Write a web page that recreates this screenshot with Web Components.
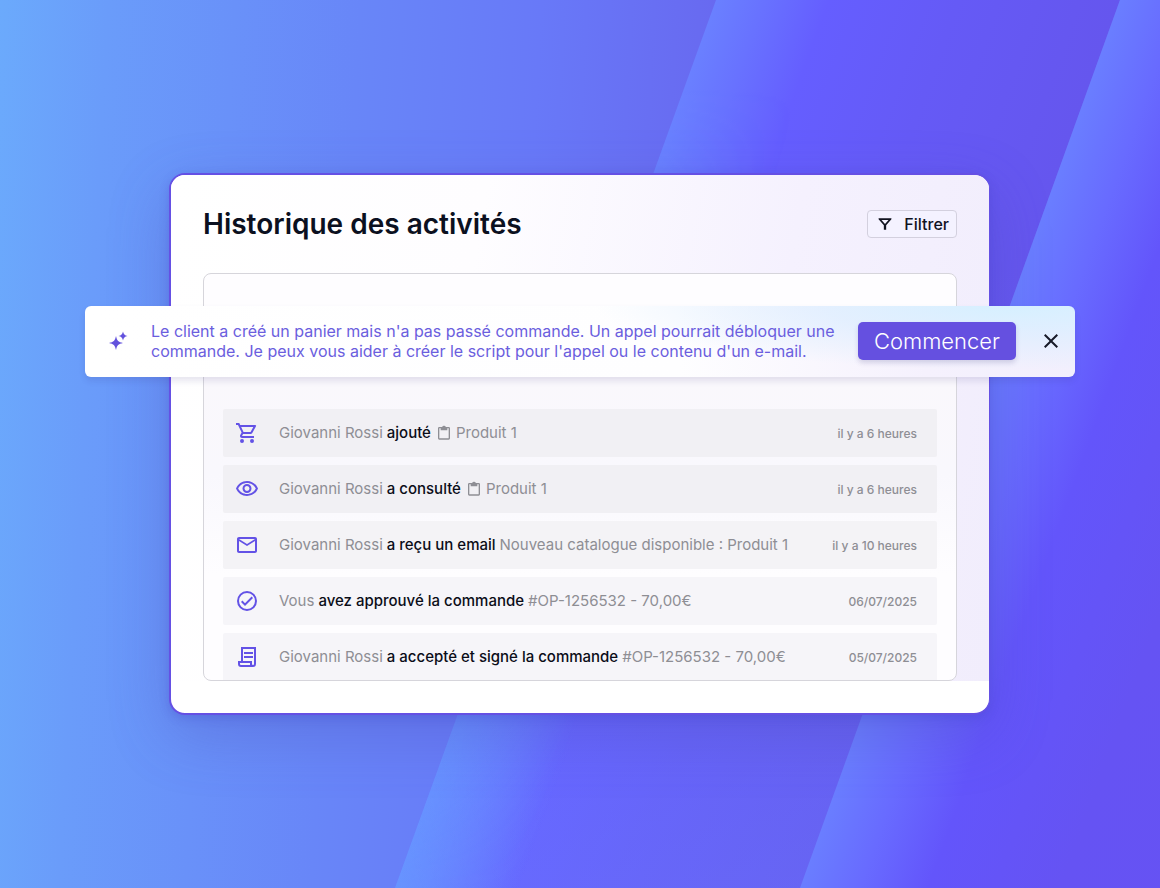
<!DOCTYPE html>
<html lang="fr">
<head>
<meta charset="utf-8">
<meta name="viewport" content="width=device-width, initial-scale=1">
<title>Historique des activités</title>
<style>
  body {
    margin: 0;
    font-family: Inter, "Liberation Sans", sans-serif;
    color: #0b1020;
  }
</style>
</head>
<body>
<activity-stage>
  <activity-card heading="Historique des activités">
    <filter-button slot="action">Filtrer</filter-button>
    <activity-item icon="cart" who="Giovanni Rossi" did="ajouté" when="il y a 6 heures" product>Produit 1</activity-item>
    <activity-item icon="eye" who="Giovanni Rossi" did="a consulté" when="il y a 6 heures" product>Produit 1</activity-item>
    <activity-item icon="mail" who="Giovanni Rossi" did="a reçu un email" when="il y a 10 heures">Nouveau catalogue disponible : Produit 1</activity-item>
    <activity-item icon="check" who="Vous" did="avez approuvé la commande" when="06/07/2025">#OP-1256532 - 70,00€</activity-item>
    <activity-item icon="receipt" who="Giovanni Rossi" did="a accepté et signé la commande" when="05/07/2025">#OP-1256532 - 70,00€</activity-item>
  </activity-card>
  <assistant-banner slot="banner" action="Commencer">Le client a créé un panier mais n'a pas passé commande. Un appel pourrait débloquer une commande. Je peux vous aider à créer le script pour l'appel ou le contenu d'un e-mail.</assistant-banner>
</activity-stage>

<script>
const icons = {
  cart: 'M15.55 13c.75 0 1.41-.41 1.75-1.03l3.58-6.49A.996.996 0 0 0 20.01 4H5.21l-.94-2H1v2h2l3.6 7.59-1.35 2.44C4.52 15.37 5.48 17 7 17h12v-2H7l1.1-2h7.45zM6.16 6h12.15l-2.76 5H8.53L6.16 6zM7 18a2 2 0 1 0 0 4 2 2 0 0 0 0-4zm10 0a2 2 0 1 0 0 4 2 2 0 0 0 0-4z',
  eye: 'M12 6c3.79 0 7.17 2.13 8.82 5.5C19.17 14.87 15.79 17 12 17s-7.17-2.13-8.82-5.5C4.83 8.13 8.21 6 12 6m0-2C7 4 2.73 7.11 1 11.5 2.73 15.89 7 19 12 19s9.27-3.11 11-7.5C21.27 7.11 17 4 12 4zm0 5a2.5 2.5 0 0 1 0 5 2.5 2.5 0 0 1 0-5m0-2a4.5 4.5 0 1 0 0 9 4.5 4.5 0 0 0 0-9z',
  mail: 'M22 6c0-1.1-.9-2-2-2H4c-1.1 0-2 .9-2 2v12c0 1.1.9 2 2 2h16c1.1 0 2-.9 2-2V6zm-2 0-8 5-8-5h16zm0 12H4V8l8 5 8-5v10z',
  check: 'M12 2a10 10 0 1 0 0 20 10 10 0 0 0 0-20zm0 18a8 8 0 1 1 0-16 8 8 0 0 1 0 16zm4.59-12.42L10 14.17l-2.59-2.58L6 13l4 4 8-8-1.41-1.42z',
  receipt: 'M6 2v14H3v3a3 3 0 0 0 3 3h12a3 3 0 0 0 3-3V2H6zm9 18H6a1 1 0 0 1-1-1v-1h10v2zm4-1a1 1 0 0 1-2 0v-3H8V4h11v15zM9 7h9v2H9zm0 4h9v2H9z',
  clipboard: 'M19 3h-4.18a3 3 0 0 0-5.64 0H5a2 2 0 0 0-2 2v15a2 2 0 0 0 2 2h14a2 2 0 0 0 2-2V5a2 2 0 0 0-2-2zm0 17H5V5h2v3h10V5h2v15z',
  funnel: 'M1 2h22v2l-9 10v8h-4v-8L1 4V2zm5 3 6 7 6-7H6z',
  close: 'M19 6.41 17.59 5 12 10.59 6.41 5 5 6.41 10.59 12 5 17.59 6.41 19 12 13.41 17.59 19 19 17.59 13.41 12z',
  sparkles: 'M9 7c1 4.7 2.3 6 7 7-4.7 1-6 2.3-7 7-1-4.7-2.3-6-7-7 4.7-1 6-2.3 7-7zM16 2.500c.6 2.9 1.6 3.9 4.5 4.5-2.9.6-3.9 1.6-4.5 4.5-.6-2.9-1.6-3.9-4.5-4.5 2.900-.6 3.900-1.600 4.500-4.500z'
};

const svgIcon = (name, size) => `
  <svg class="icon" viewBox="0 0 24 24" width="${size}" height="${size}" fill="currentColor" fill-rule="evenodd" aria-hidden="true">
    <path d="${icons[name]}"/>
  </svg>`;

const stageTemplate = document.createElement('template');
stageTemplate.innerHTML = `
  <style>
    :host {
      box-sizing: border-box;
      display: grid;
      align-content: center;
      justify-items: center;
      position: relative;
      min-height: 100vh;
      padding: 32px 85px;
      overflow: hidden;
      isolation: isolate;
    }
    .backdrop {
      position: absolute;
      inset: 0;
      z-index: -1;
      width: 100%;
      height: 100%;
    }
    .content {
      position: relative;
      box-sizing: border-box;
      width: 100%;
      max-width: 990px;
      padding: 0 85px 0 84px;
    }
    .banner {
      position: absolute;
      top: 133px;
      left: 0;
      right: 0;
    }
  </style>
  <svg class="backdrop" viewBox="0 0 1160 888" preserveAspectRatio="none" aria-hidden="true">
    <defs>
      <linearGradient id="base" gradientUnits="userSpaceOnUse" x1="0" y1="0" x2="720" y2="40">
        <stop offset="0" stop-color="#6baafc"/>
        <stop offset=".15" stop-color="#6a9cfa"/>
        <stop offset=".5" stop-color="#6886f8"/>
        <stop offset=".75" stop-color="#6879f8"/>
        <stop offset="1" stop-color="#6869f0"/>
      </linearGradient>
      <linearGradient id="middle" gradientUnits="userSpaceOnUse" x1="716" y1="0" x2="1073" y2="129">
        <stop offset="0" stop-color="#6a80ff"/>
        <stop offset=".12" stop-color="#6872ff"/>
        <stop offset=".28" stop-color="#655eff"/>
        <stop offset=".6" stop-color="#655af6"/>
        <stop offset="1" stop-color="#6556ee"/>
      </linearGradient>
      <linearGradient id="right" gradientUnits="userSpaceOnUse" x1="1120" y1="0" x2="1477" y2="129">
        <stop offset="0" stop-color="#6a7eff"/>
        <stop offset=".15" stop-color="#686bff"/>
        <stop offset=".32" stop-color="#6355fb"/>
        <stop offset=".65" stop-color="#6553f3"/>
        <stop offset="1" stop-color="#6652f3"/>
      </linearGradient>
      <linearGradient id="cool" x1="0" y1="0" x2="0" y2="1">
        <stop offset=".3" stop-color="#6a80ff" stop-opacity="0"/>
        <stop offset="1" stop-color="#6a80ff" stop-opacity=".35"/>
      </linearGradient>
      <linearGradient id="edge" gradientUnits="userSpaceOnUse" x1="457" y1="715" x2="567" y2="755">
        <stop offset="0" stop-color="#669cff" stop-opacity=".7"/>
        <stop offset="1" stop-color="#669cff" stop-opacity="0"/>
      </linearGradient>
      <linearGradient id="fade" x1="0" y1="0" x2="0" y2="1">
        <stop offset=".1" stop-color="#000"/>
        <stop offset="1" stop-color="#fff"/>
      </linearGradient>
      <mask id="lower">
        <rect width="1160" height="888" fill="url(#fade)"/>
      </mask>
    </defs>
    <rect width="1160" height="888" fill="url(#base)"/>
    <path d="M716 0H1120L800 888H395Z" fill="url(#middle)"/>
    <path d="M716 0H1120L800 888H395Z" fill="url(#cool)"/>
    <path d="M716 0H1120L800 888H395Z" fill="url(#edge)" mask="url(#lower)"/>
    <path d="M1120 0H1160V888H800Z" fill="url(#right)"/>
  </svg>
  <div class="content">
    <slot></slot>
    <div class="banner"><slot name="banner"></slot></div>
  </div>
`;

class ActivityStage extends HTMLElement {
  constructor() {
    super();
    this.attachShadow({ mode: 'open' });
    this.shadowRoot.appendChild(document.importNode(stageTemplate.content, true));
  }
}

const cardTemplate = document.createElement('template');
cardTemplate.innerHTML = `
  <style>
    :host {
      display: block;
      box-sizing: border-box;
      border: 2px solid #6550e4;
      border-right-width: 1px;
      border-radius: 16px;
      padding-bottom: 32px;
      background: #fff;
      box-shadow: 0 3px 10px rgba(64, 60, 190, .25), 0 20px 60px rgba(74, 72, 180, .3);
      overflow: hidden;
    }
    .body {
      padding: 32px 32px 0;
      background: linear-gradient(100deg, #fff 0%, #fefdff 35%, #f5f1fe 70%, #f1edfc 100%);
    }
    header {
      display: flex;
      align-items: center;
      justify-content: space-between;
      height: 34px;
      margin-bottom: 32px;
    }
    h1 {
      margin: 0;
      font-size: 28px;
      line-height: 32px;
      font-weight: 600;
    }
    .list {
      display: flex;
      flex-direction: column;
      gap: 8px;
      box-sizing: border-box;
      height: 408px;
      padding: 135px 19px 0;
      border: 1px solid #d6d5db;
      border-radius: 8px;
      background: linear-gradient(#fefdff 0, #fefdff 90px, #faf8fc 104px, #f9f8fd 200px, #fefdff 300px);
      overflow: hidden;
    }
  </style>
  <div class="body">
    <header>
      <h1></h1>
      <slot name="action"></slot>
    </header>
    <div class="list" role="list"><slot></slot></div>
  </div>
`;

class ActivityCard extends HTMLElement {
  constructor() {
    super();
    this.attachShadow({ mode: 'open' });
    this.shadowRoot.appendChild(document.importNode(cardTemplate.content, true));
    this.shadowRoot.querySelector('h1').textContent = this.getAttribute('heading');
  }
}

const filterTemplate = document.createElement('template');
filterTemplate.innerHTML = `
  <style>
    :host {
      display: block;
    }
    button {
      display: flex;
      align-items: center;
      gap: 12px;
      box-sizing: border-box;
      height: 28px;
      padding: 0 7px 0 10px;
      border: 1px solid #d3d0de;
      border-radius: 4px;
      background: #f4f2ff;
      color: #11131f;
      font: 500 16px/24px Inter, sans-serif;
      cursor: pointer;
    }
  </style>
  <button type="button">${svgIcon('funnel', 14)}<slot></slot></button>
`;

class FilterButton extends HTMLElement {
  constructor() {
    super();
    this.attachShadow({ mode: 'open' });
    this.shadowRoot.appendChild(document.importNode(filterTemplate.content, true));
  }
}

const itemTemplate = document.createElement('template');
itemTemplate.innerHTML = `
  <style>
    :host {
      display: flex;
      align-items: center;
      flex: none;
      box-sizing: border-box;
      height: 48px;
      padding: 0 20px 0 12px;
      border-radius: 2px;
      background: #f1f0f4;
      color: #8e8e94;
      font-size: 15px;
      line-height: 24px;
    }
    :host(:nth-of-type(n + 3)) {
      background: #f4f3f6;
    }
    :host(:nth-of-type(n + 4)) {
      background: #f6f5f9;
    }
    .icon {
      flex: none;
    }
    .kind {
      display: flex;
      margin-right: 20px;
      color: #6352e6;
    }
    .what {
      display: flex;
      align-items: center;
      flex: 1;
      gap: 4px;
      white-space: nowrap;
    }
    .did {
      color: #0b0d18;
      font-weight: 500;
    }
    .product {
      display: flex;
      padding-left: 1px;
    }
    time {
      padding-top: 2px;
      font-size: 12px;
      font-weight: 500;
    }
  </style>
  <span class="kind"></span>
  <div class="what">
    <span class="who"></span>
    <span class="did"></span>
    <span class="product"></span>
    <span><slot></slot></span>
  </div>
  <time></time>
`;

class ActivityItem extends HTMLElement {
  constructor() {
    super();
    this.attachShadow({ mode: 'open' });
    this.shadowRoot.appendChild(document.importNode(itemTemplate.content, true));
    this.setAttribute('role', 'listitem');

    this.shadowRoot.querySelector('.kind').innerHTML = svgIcon(this.getAttribute('icon'), 24);
    this.shadowRoot.querySelector('.who').textContent = this.getAttribute('who');
    this.shadowRoot.querySelector('.did').textContent = this.getAttribute('did');
    this.shadowRoot.querySelector('time').textContent = this.getAttribute('when');

    const product = this.shadowRoot.querySelector('.product');
    if (this.hasAttribute('product')) {
      product.innerHTML = svgIcon('clipboard', 16);
    } else {
      product.remove();
    }
  }
}

const bannerTemplate = document.createElement('template');
bannerTemplate.innerHTML = `
  <style>
    :host {
      display: flex;
      align-items: center;
      box-sizing: border-box;
      min-height: 71px;
      padding: 0 12px 1px 22px;
      border-radius: 6px;
      background:
        radial-gradient(ellipse 420px 64px at 94% 0, #d6f0ff 0%, rgba(222, 238, 255, .8) 45%, rgba(240, 238, 255, 0) 100%),
        linear-gradient(90deg, #fff 0%, #fefeff 60%, #f5f1fd 85%, #f2effd 100%);
      box-shadow: 0 4px 6px rgba(50, 40, 120, .12);
    }
    .sparkles {
      display: flex;
      margin-right: 20px;
      color: #6352dd;
    }
    p {
      flex: 1;
      margin: 0;
      color: #6b5ede;
      font-size: 16px;
      line-height: 20px;
      font-weight: 400;
    }
    button {
      border: 0;
      cursor: pointer;
    }
    .start {
      height: 38px;
      margin: 0 23px 0 16px;
      padding: 0 16px;
      border-radius: 5px;
      background: #6550e0;
      box-shadow: 0 3px 5px rgba(60, 50, 120, .18);
      color: #fff;
      font: 300 22px/38px Inter, sans-serif;
    }
    .close {
      display: flex;
      padding: 0;
      background: none;
      color: #171a28;
    }
  </style>
  <span class="sparkles">${svgIcon('sparkles', 24)}</span>
  <p><slot></slot></p>
  <button class="start" type="button"></button>
  <button class="close" type="button" aria-label="Fermer">${svgIcon('close', 24)}</button>
`;

class AssistantBanner extends HTMLElement {
  constructor() {
    super();
    this.attachShadow({ mode: 'open' });
    this.shadowRoot.appendChild(document.importNode(bannerTemplate.content, true));
    this.shadowRoot.querySelector('.start').textContent = this.getAttribute('action');
    this.closeEventListener();
  }

  closeEventListener = () => {
    this.shadowRoot.querySelector('.close').addEventListener('click', () => {
      this.remove();
    });
  };
}

window.customElements.define('activity-stage', ActivityStage);
window.customElements.define('activity-card', ActivityCard);
window.customElements.define('filter-button', FilterButton);
window.customElements.define('activity-item', ActivityItem);
window.customElements.define('assistant-banner', AssistantBanner);
</script>
</body>
</html>
